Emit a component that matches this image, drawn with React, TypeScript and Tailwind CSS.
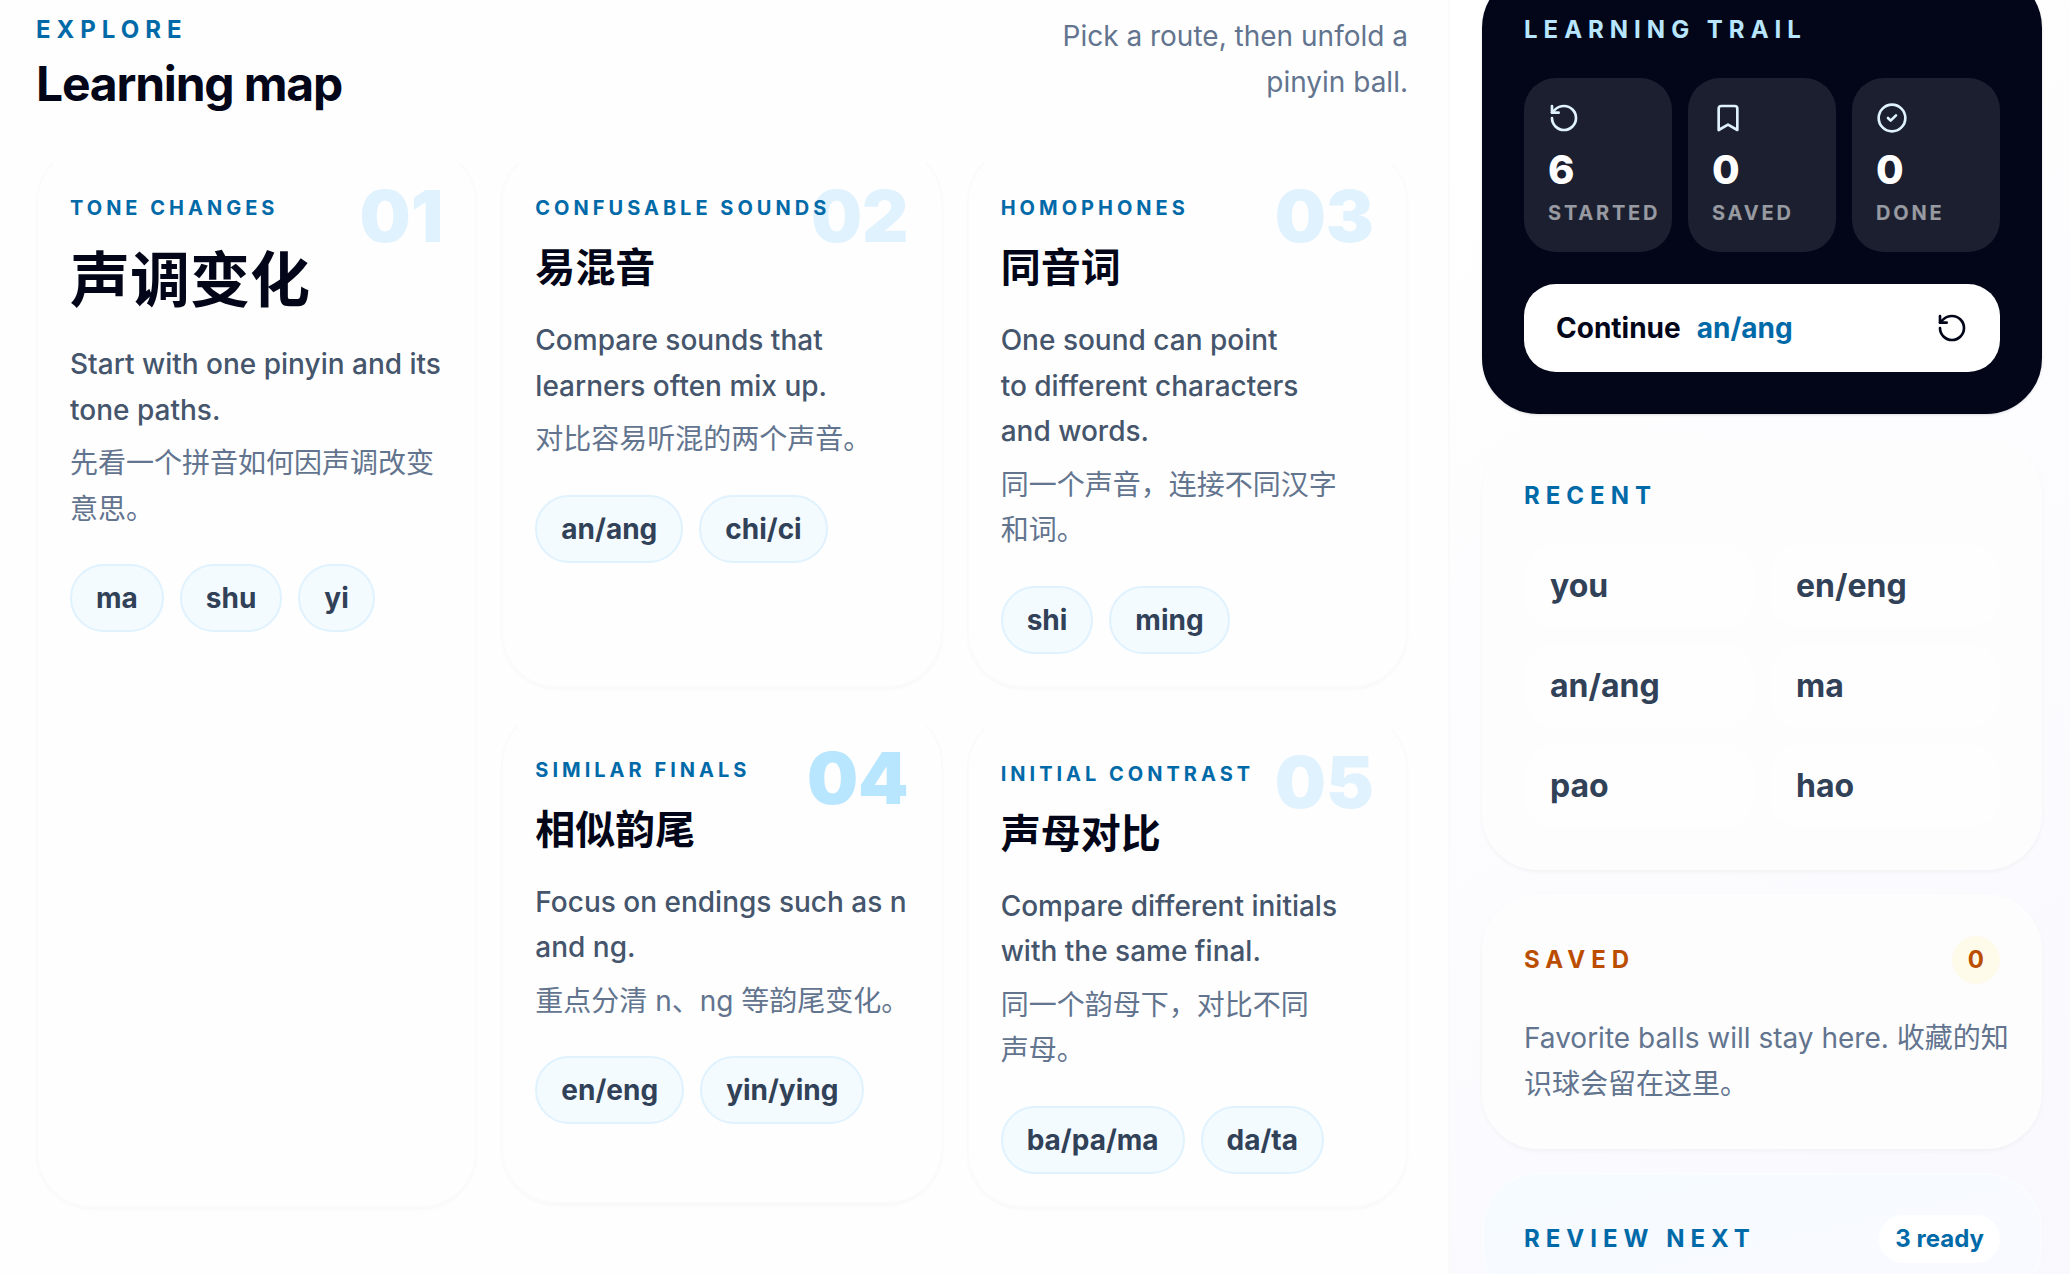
import { Bookmark, CircleCheck, RotateCcw } from "lucide-react";
import type { LucideIcon } from "lucide-react";
import { useState } from "react";

interface Route {
  index: string;
  label: string;
  title: string;
  text: string;
  textZh: string;
  chips: string[];
}

const ROUTES: Route[] = [
  {
    index: "01",
    label: "Tone changes",
    title: "声调变化",
    text: "Start with one pinyin and its tone paths.",
    textZh: "先看一个拼音如何因声调改变意思。",
    chips: ["ma", "shu", "yi"],
  },
  {
    index: "02",
    label: "Confusable sounds",
    title: "易混音",
    text: "Compare sounds that learners often mix up.",
    textZh: "对比容易听混的两个声音。",
    chips: ["an/ang", "chi/ci"],
  },
  {
    index: "03",
    label: "Homophones",
    title: "同音词",
    text: "One sound can point to different characters and words.",
    textZh: "同一个声音，连接不同汉字和词。",
    chips: ["shi", "ming"],
  },
  {
    index: "04",
    label: "Similar finals",
    title: "相似韵尾",
    text: "Focus on endings such as n and ng.",
    textZh: "重点分清 n、ng 等韵尾变化。",
    chips: ["en/eng", "yin/ying"],
  },
  {
    index: "05",
    label: "Initial contrast",
    title: "声母对比",
    text: "Compare different initials with the same final.",
    textZh: "同一个韵母下，对比不同声母。",
    chips: ["ba/pa/ma", "da/ta"],
  },
];

const RECENT = ["you", "en/eng", "an/ang", "ma", "pao", "hao"];

export default function App() {
  const [activeRoute, setActiveRoute] = useState("04");

  return (
    <div className="flex min-h-screen items-stretch gap-8 overflow-hidden bg-linear-to-br from-white from-40% to-[#f9f8fd] pr-7 font-[Inter,'Noto_Sans_CJK_SC',sans-serif] text-slate-950">
      <main className="min-w-0 flex-1 border-r-2 border-[#fafafb] bg-[#fefefe] pt-3.5 pr-10 pb-10 pl-9">
        <header className="mb-8 flex items-start justify-between gap-8">
          <div>
            <p className="text-[24px] leading-8 font-bold tracking-[0.25em] text-sky-700 uppercase">Explore</p>
            <h1 className="mt-2 text-5xl leading-[60px] font-bold tracking-tight">Learning map</h1>
          </div>
          <p className="max-w-96 text-right text-[28px] leading-relaxed text-slate-500">
            Pick a route, then unfold a pinyin ball.
          </p>
        </header>

        <div className="grid grid-cols-3 gap-6">
          {ROUTES.map((route) => (
            <RouteCard
              key={route.index}
              route={route}
              featured={route.index === "01"}
              active={route.index === activeRoute}
              onEnter={() => setActiveRoute(route.index)}
            />
          ))}
        </div>
      </main>

      <aside className="-mt-7 flex w-[560px] shrink-0 flex-col gap-6">
        <section className="rounded-[56px] border-2 border-slate-950 bg-slate-950 p-10 shadow-sm">
          <Eyebrow className="text-sky-200">Learning trail</Eyebrow>
          <div className="mt-8 grid grid-cols-3 gap-4">
            <Stat icon={RotateCcw} value={6} label="Started" />
            <Stat icon={Bookmark} value={0} label="Saved" />
            <Stat icon={CircleCheck} value={0} label="Done" />
          </div>
          <button
            type="button"
            className="mt-8 flex w-full items-center justify-between rounded-4xl bg-white px-8 py-6 text-[28px] leading-10 font-bold text-slate-950"
          >
            <span className="flex gap-4">
              Continue <span className="text-sky-700">an/ang</span>
            </span>
            <RotateCcw size={32} aria-hidden />
          </button>
        </section>

        <Panel>
          <Eyebrow className="text-sky-700">Recent</Eyebrow>
          <div className="mt-8 grid grid-cols-2 gap-4">
            {RECENT.map((name) => (
              <button
                key={name}
                type="button"
                className="rounded-4xl border-2 border-[#fefefe] bg-[#fefefe] px-6 py-4 text-left text-[32px] leading-12 font-bold text-slate-700"
              >
                {name}
              </button>
            ))}
          </div>
        </Panel>

        <Panel>
          <div className="flex items-center justify-between">
            <Eyebrow className="text-amber-700">Saved</Eyebrow>
            <span className="rounded-full bg-amber-50 px-4 py-2 text-[24px] leading-8 font-bold text-amber-700">0</span>
          </div>
          <p className="mt-8 -mr-3 text-[28px] leading-relaxed text-slate-500">
            Favorite balls will stay here. 收藏的知识球会留在这里。
          </p>
        </Panel>

        <section className="rounded-[56px] border-2 border-[#fafcff] bg-linear-to-br from-[#f5fbff] to-[#fafaff] p-10 shadow-sm shadow-black/2">
          <div className="flex items-center justify-between">
            <Eyebrow className="text-sky-700">Review next</Eyebrow>
            <span className="rounded-full bg-white px-4 py-2 text-[24px] leading-8 font-bold text-sky-700">3 ready</span>
          </div>
        </section>
      </aside>
    </div>
  );
}

interface RouteCardProps {
  route: Route;
  featured: boolean;
  active: boolean;
  onEnter: () => void;
}

function RouteCard({ route, featured, active, onEnter }: RouteCardProps) {
  return (
    <article
      onMouseEnter={onEnter}
      className={`relative rounded-[56px] border-2 border-[#fbfbfb] border-t-[#fefefe] bg-[#fefefe] px-8 pt-[46px] pb-8 shadow-[0_2px_3px_rgb(0_0_0/0.025)] transition ${
        featured ? "row-span-2" : ""
      } ${active ? "-translate-y-1" : ""}`}
    >
      <span
        aria-hidden
        className={`absolute top-8 right-8 text-7xl leading-[72px] font-black ${active ? "text-sky-200" : "text-sky-100"}`}
      >
        {route.index}
      </span>
      <p className="relative text-[20px] leading-7 font-bold tracking-[0.2em] whitespace-nowrap text-sky-700 uppercase">
        {route.label}
      </p>
      <h2 className={`mt-4 mb-5 font-semibold ${featured ? "text-6xl leading-[84px]" : "text-[40px] leading-[60px]"}`}>
        {route.title}
      </h2>
      <p className="text-[28px] leading-relaxed font-medium text-pretty text-slate-600">{route.text}</p>
      <p lang="zh" className="mt-2 -mr-3 text-[28px] leading-relaxed text-pretty text-slate-500">
        {route.textZh}
      </p>
      <div className="mt-8 flex flex-wrap gap-4">
        {route.chips.map((chip) => (
          <button
            key={chip}
            type="button"
            className="rounded-full border-2 border-sky-100 bg-sky-50/70 px-6 py-3 text-[28px] leading-10 font-bold text-slate-700"
          >
            {chip}
          </button>
        ))}
      </div>
    </article>
  );
}

function Stat({ icon: Icon, value, label }: { icon: LucideIcon; value: number; label: string }) {
  return (
    <div className="rounded-4xl bg-white/10 p-6">
      <Icon size={32} className="text-sky-100" aria-hidden />
      <p className="mt-2 text-[40px] leading-[56px] font-extrabold text-white">{value}</p>
      <p className="text-[20px] leading-[30px] font-bold tracking-[0.14em] text-white/55 uppercase">{label}</p>
    </div>
  );
}

function Panel({ children }: { children: React.ReactNode }) {
  return (
    <section className="rounded-[56px] border-2 border-[#fdfdfe] bg-[#fdfdfe] p-10 shadow-[0_2px_4px_rgb(0_0_0/0.04)]">
      {children}
    </section>
  );
}

function Eyebrow({ className, children }: { className: string; children: React.ReactNode }) {
  return <h2 className={`text-[24px] leading-8 font-bold tracking-[0.25em] uppercase ${className}`}>{children}</h2>;
}
